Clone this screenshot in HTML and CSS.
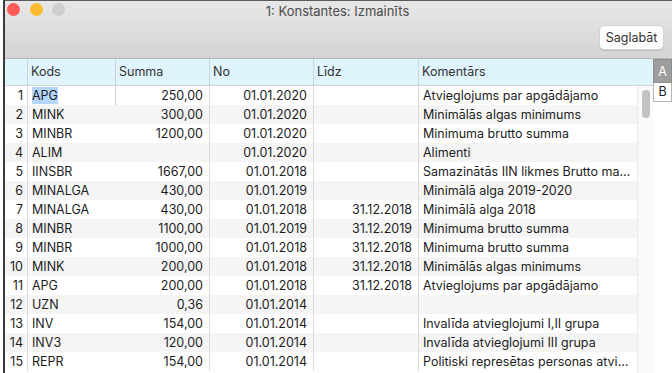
FILE: index.html
```html
<!DOCTYPE html>
<html lang="lv">
<head>
    <meta charset="UTF-8">
    <meta name="viewport" content="width=device-width, initial-scale=1.0">
    <title>1: Konstantes: Izmainīts</title>
    <link rel="stylesheet" href="styles.css">
</head>
<body>
    <div class="window">
        <div class="toolbar">
            <div class="titlebar">
                <div class="lights">
                    <span class="light close"></span>
                    <span class="light min"></span>
                    <span class="light zoom"></span>
                </div>
                <div class="title">1: Konstantes: Izmainīts</div>
                <div></div>
            </div>
            <div class="actions">
                <button class="save">Saglabāt</button>
            </div>
        </div>
        <div class="content">
            <div class="sheet">
                <div class="head">
                    <span></span>
                    <span>Kods</span>
                    <span>Summa</span>
                    <span>No</span>
                    <span>Līdz</span>
                    <span>Komentārs</span>
                </div>
                <div class="body">
                    <div class="rows">
                        <div class="row"><span class="num">1</span><span class="code editing"><em class="selected">APG</em></span><span class="right sep">250,00</span><span class="right sep">01.01.2020</span><span class="right sep"></span><span>Atvieglojums par apgādājamo</span></div>
                        <div class="row"><span class="num">2</span><span class="code">MINK</span><span class="right sep">300,00</span><span class="right sep">01.01.2020</span><span class="right sep"></span><span>Minimālās algas minimums</span></div>
                        <div class="row"><span class="num">3</span><span class="code">MINBR</span><span class="right sep">1200,00</span><span class="right sep">01.01.2020</span><span class="right sep"></span><span>Minimuma brutto summa</span></div>
                        <div class="row"><span class="num">4</span><span class="code">ALIM</span><span class="right sep"></span><span class="right sep">01.01.2020</span><span class="right sep"></span><span>Alimenti</span></div>
                        <div class="row"><span class="num">5</span><span class="code">IINSBR</span><span class="right sep">1667,00</span><span class="right sep">01.01.2018</span><span class="right sep"></span><span>Samazinātās IIN likmes Brutto ma…</span></div>
                        <div class="row"><span class="num">6</span><span class="code">MINALGA</span><span class="right sep">430,00</span><span class="right sep">01.01.2019</span><span class="right sep"></span><span>Minimālā alga 2019-2020</span></div>
                        <div class="row"><span class="num">7</span><span class="code">MINALGA</span><span class="right sep">430,00</span><span class="right sep">01.01.2018</span><span class="right sep">31.12.2018</span><span>Minimālā alga 2018</span></div>
                        <div class="row"><span class="num">8</span><span class="code">MINBR</span><span class="right sep">1100,00</span><span class="right sep">01.01.2019</span><span class="right sep">31.12.2019</span><span>Minimuma brutto summa</span></div>
                        <div class="row"><span class="num">9</span><span class="code">MINBR</span><span class="right sep">1000,00</span><span class="right sep">01.01.2018</span><span class="right sep">31.12.2018</span><span>Minimuma brutto summa</span></div>
                        <div class="row"><span class="num">10</span><span class="code">MINK</span><span class="right sep">200,00</span><span class="right sep">01.01.2018</span><span class="right sep">31.12.2018</span><span>Minimālās algas minimums</span></div>
                        <div class="row"><span class="num">11</span><span class="code">APG</span><span class="right sep">200,00</span><span class="right sep">01.01.2018</span><span class="right sep">31.12.2018</span><span>Atvieglojums par apgādājamo</span></div>
                        <div class="row"><span class="num">12</span><span class="code">UZN</span><span class="right sep">0,36</span><span class="right sep">01.01.2014</span><span class="right sep"></span><span></span></div>
                        <div class="row"><span class="num">13</span><span class="code">INV</span><span class="right sep">154,00</span><span class="right sep">01.01.2014</span><span class="right sep"></span><span>Invalīda atvieglojumi I,II grupa</span></div>
                        <div class="row"><span class="num">14</span><span class="code">INV3</span><span class="right sep">120,00</span><span class="right sep">01.01.2014</span><span class="right sep"></span><span>Invalīda atvieglojumi III grupa</span></div>
                        <div class="row"><span class="num">15</span><span class="code">REPR</span><span class="right sep">154,00</span><span class="right sep">01.01.2014</span><span class="right sep"></span><span>Politiski represētas personas atvi…</span></div>
                    </div>
                    <div class="scroll">
                        <div class="thumb"></div>
                    </div>
                </div>
            </div>
            <div class="tabs">
                <div class="tab active">A</div>
                <div class="tab">B</div>
            </div>
        </div>
    </div>
</body>
</html>
```

FILE: styles.css
```css
body {
    margin: 0;
    font-family: Inter, "Liberation Sans", sans-serif;
    font-size: 12.5px;
    color: #1c1c1c;
    background-color: #fff;
}
.window {
    margin-left: 3px;
    height: 372px;
    border-left: 2px solid #3b3b3b;
    border-top: 1px solid #5a5a5a;
    display: flex;
    flex-direction: column;
    overflow: hidden;
}
.toolbar {
    height: 57px;
    border-bottom: 1px solid #b9b9b9;
    background: linear-gradient(#e7e7e7, #d4d4d4);
    display: flex;
    flex-direction: column;
}
.titlebar {
    height: 20px;
    display: grid;
    grid-template-columns: 1fr auto 1fr;
    align-items: center;
}
.lights {
    display: flex;
    gap: 9.5px;
    padding-left: 2px;
    margin-top: -3px;
}
.light {
    width: 13px;
    height: 13px;
    border-radius: 50%;
}
.light.close {
    background-color: #fc5b57;
}
.light.min {
    background-color: #fdbc2f;
}
.light.zoom {
    background-color: #cfcfcf;
}
.title {
    color: #4d4d4d;
    font-size: 13px;
    margin-right: 2px;
}
.actions {
    display: flex;
    justify-content: flex-end;
    padding: 4px 8px 0 0;
}
.save {
    width: 65px;
    height: 25px;
    font-family: inherit;
    font-size: 12.5px;
    color: #333;
    background-color: #fdfdfd;
    border: 1px solid #d2d2d2;
    border-radius: 5px;
    box-shadow: 0 1px 1px rgba(0, 0, 0, 0.12);
    padding: 0;
}
.content {
    display: flex;
    flex: 1;
}
.sheet {
    flex: 1;
    display: flex;
    flex-direction: column;
}
.head,
.row {
    display: grid;
    grid-template-columns: 23px 88px 94px 104px 105px 1fr;
}
.head {
    height: 27px;
    box-sizing: border-box;
    background-color: #dff4fc;
    border-bottom: 1px solid #cbd6da;
    color: #333;
}
.head span {
    padding-left: 3px;
    line-height: 26px;
    border-right: 1px solid #c5d6dc;
}
.head span:last-child {
    border-right: none;
}
.body {
    display: flex;
    flex: 1;
}
.rows {
    flex: 1;
}
.row {
    height: 19px;
    line-height: 19px;
}
.row:nth-child(even) {
    background-color: #f5f5f5;
}
.row span {
    padding: 0 4px;
    white-space: nowrap;
    overflow: hidden;
}
.row .num {
    text-align: right;
    border-right: 1px solid #dadada;
}
.row .right {
    text-align: right;
    padding-right: 6px;
}
.row .sep {
    border-right: 1px solid #dadada;
}
.row .editing {
    border-right: 1px solid #d0d0d0;
}
.selected {
    font-style: normal;
    background-color: #b4d6fb;
    padding: 1px 0;
}
.scroll {
    width: 16px;
    box-sizing: border-box;
    border-left: 1px solid #e9e9e9;
    background-color: #fafafa;
    padding: 4px 0 0 4px;
}
.thumb {
    width: 8px;
    height: 28px;
    border-radius: 4px;
    background-color: #c2c2c2;
}
.tabs {
    width: 19px;
    display: flex;
    flex-direction: column;
}
.tab {
    height: 19px;
    box-sizing: border-box;
    text-align: center;
    line-height: 18px;
    background-color: #fff;
    border: 1px solid #b5b5b5;
    border-top: none;
    color: #222;
}
.tab.active {
    height: 24px;
    line-height: 24px;
    background-color: #9e9e9e;
    border: 1px solid #8e8e8e;
    color: #fff;
}
```
